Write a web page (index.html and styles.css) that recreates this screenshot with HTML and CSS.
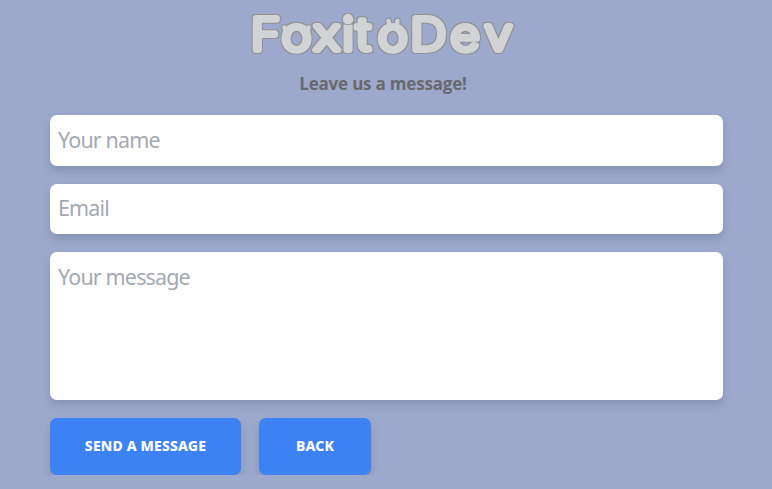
FILE: index.html
```html
<!DOCTYPE html>
<html lang="en">
<head>
<meta charset="utf-8">
<title>FoxitoDev</title>
<link rel="stylesheet" href="styles.css">
</head>
<body>
<main class="contact">
  <svg class="logo" viewBox="248 10 270 48" role="img" aria-label="FoxitoDev">
    <defs>
      <filter id="outline" x="-5%" y="-10%" width="110%" height="120%" color-interpolation-filters="sRGB">
        <feMorphology in="SourceAlpha" operator="dilate" radius="0.6" result="wide"/>
        <feFlood flood-color="#909296"/>
        <feComposite in2="wide" operator="in"/>
        <feMerge><feMergeNode/><feMergeNode in="SourceGraphic"/></feMerge>
      </filter>
    </defs>
    <g filter="url(#outline)">
      <text class="wordmark" transform="scale(1.14 1)" y="50.3" x="220.2 247.3 275.4 300.4 313 331.8 360.2 395.5 425.3">FoxitoDev</text>
      <circle class="dot" cx="348" cy="18.7" r="5"/>
      <path class="ears" d="M284.5 27.5l1.5 5M308.5 27.5l-1.5 5M388.5 21l1 6M397.5 21l-1 6"/>
    </g>
    <path class="crease" d="M343.5 24q4.5 1.6 9 0"/>
  </svg>
  <h1 class="title">Leave us a message!</h1>
  <form class="form">
    <input class="field" type="text" placeholder="Your name">
    <input class="field" type="email" placeholder="Email">
    <textarea class="field message" placeholder="Your message"></textarea>
    <div class="actions">
      <button class="button send" type="button">SEND A MESSAGE</button>
      <button class="button back" type="button">BACK</button>
    </div>
  </form>
</main>
</body>
</html>
```
FILE: styles.css
```css
* { box-sizing: border-box; }
body {
  margin: 0;
  background: #9da9cc;
  font-family: "Noto Sans", "Open Sans", sans-serif;
}
.contact {
  display: flex;
  flex-direction: column;
  align-items: center;
  padding: 10px 49px 0 50px;
}
.logo { display: block; width: 270px; height: 48px; margin-right: 7px; overflow: visible; }
.wordmark {
  font: 200 43.5px Inter, sans-serif;
  fill: #d2d3d4;
  stroke: #d2d3d4;
  stroke-width: 6;
  stroke-linejoin: round;
}
.dot { fill: #d2d3d4; }
.crease { fill: none; stroke: #909296; stroke-width: .9; }
.ears { fill: none; stroke: #d2d3d4; stroke-width: 4.5; stroke-linecap: round; }
.title {
  margin: 14px 7px 0 0;
  font: 700 17px/24px "Open Sans", sans-serif;
  letter-spacing: -.2px;
  color: #67696f;
  white-space: nowrap;
}
.form { display: flex; flex-direction: column; gap: 18px; width: 100%; margin-top: 19.3px; }
.field {
  display: block;
  width: 100%;
  height: 50.5px;
  margin: 0;
  padding: 0 8px 3px;
  border: 0;
  border-radius: 7px;
  background: #fff;
  box-shadow: 0 5px 9px rgba(50, 60, 90, .2);
  font: 400 21.5px/30px "Noto Sans", sans-serif;
  letter-spacing: -.85px;
  resize: none;
}
.field::placeholder { color: #a5a9b1; opacity: 1; }
.message { height: 147.5px; padding-top: 10px; }
.actions { display: flex; gap: 18px; }
.button {
  height: 57.5px;
  padding: 0 0 2px;
  border: 0;
  border-radius: 7px;
  background: #3c82f5;
  color: #fff;
  box-shadow: 0 5px 9px rgba(50, 60, 90, .2);
  font: 800 14px/20px "Noto Sans", sans-serif;
  letter-spacing: .15px;
}
.send { width: 191px; }
.back { width: 112px; }
```
